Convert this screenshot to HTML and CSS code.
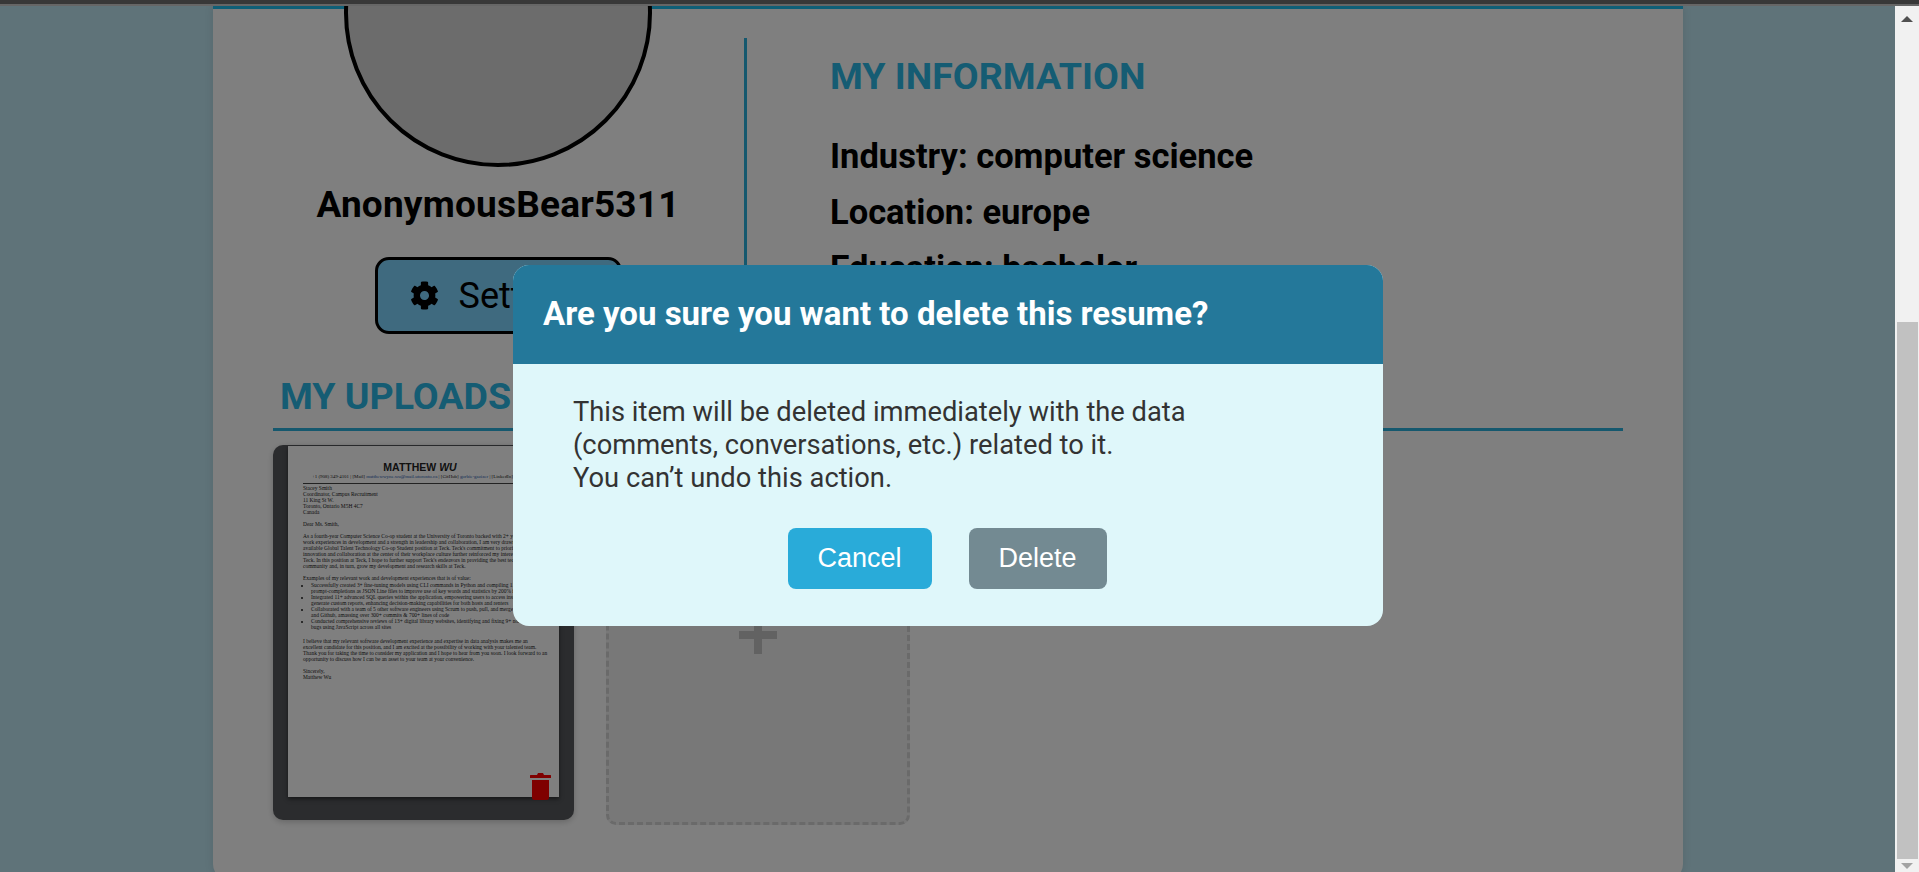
FILE: index.html
```html
<!DOCTYPE html>
<html lang="en">
<head>
    <meta charset="UTF-8">
    <meta name="viewport" content="width=device-width, initial-scale=1.0">
    <title>Profile</title>
    <link rel="stylesheet" href="styles.css">
</head>
<body>
    <div class="top-strip"></div>

    <div class="window">
        <div class="page">
            <div class="profile-card">
                <div class="profile-row">
                    <div class="user-col">
                        <div class="avatar"></div>
                        <div class="username">AnonymousBear5311</div>
                        <button class="settings-btn">
                            <svg class="gear" viewBox="0 0 512 512"><path d="M487.4 315.7l-42.6-24.6c4.3-23.2 4.3-47 0-70.2l42.6-24.6c4.9-2.8 7.1-8.6 5.5-14-11.1-35.6-30-67.8-54.7-94.6-3.8-4.1-10-5.1-14.8-2.3L380.8 110c-17.9-15.4-38.5-27.3-60.8-35.1V25.8c0-5.6-3.9-10.5-9.4-11.7-36.7-8.2-74.3-7.8-109.2 0-5.5 1.2-9.4 6.1-9.4 11.7V75c-22.2 7.9-42.8 19.8-60.8 35.1L88.7 85.5c-4.9-2.8-11-1.9-14.8 2.3-24.7 26.7-43.6 58.9-54.7 94.6-1.7 5.4.6 11.2 5.5 14L67.3 221c-4.3 23.2-4.3 47 0 70.2l-42.6 24.6c-4.9 2.8-7.1 8.6-5.5 14 11.1 35.6 30 67.8 54.7 94.6 3.8 4.1 10 5.1 14.8 2.3l42.6-24.6c17.9 15.4 38.5 27.3 60.8 35.1v49.2c0 5.6 3.9 10.5 9.4 11.7 36.7 8.2 74.3 7.8 109.2 0 5.5-1.2 9.4-6.1 9.4-11.7v-49.2c22.2-7.9 42.8-19.8 60.8-35.1l42.6 24.6c4.9 2.8 11 1.9 14.8-2.3 24.7-26.7 43.6-58.9 54.7-94.6 1.5-5.5-.7-11.3-5.6-14.1zM256 336c-44.1 0-80-35.9-80-80s35.9-80 80-80 80 35.9 80 80-35.9 80-80 80z"/></svg>
                            <span>Settings</span>
                        </button>
                    </div>
                    <div class="info-col">
                        <h2 class="section-title">MY INFORMATION</h2>
                        <p class="info-line first">Industry: computer science</p>
                        <p class="info-line">Location: europe</p>
                        <p class="info-line">Education: bachelor</p>
                    </div>
                </div>

                <h2 class="section-title uploads-title">MY UPLOADS</h2>

                <div class="uploads">
                    <div class="resume-card">
                        <div class="resume-doc">
                            <div class="doc-name">MATTHEW <em>WU</em></div>
                            <div class="doc-contact">+1 (908) 349-4101 | [Mail] <span class="doc-link">matthewwyne.wu@mail.utoronto.ca</span> | [GitHub] <span class="doc-link">gorbie-gazizer</span> | [LinkedIn] <span class="doc-link">matthew-wu</span></div>
                            <p>Stacey Smith<br>Coordinator, Campus Recruitment<br>11 King St W.<br>Toronto, Ontario M5H 4C7<br>Canada</p>
                            <p>Dear Ms. Smith,</p>
                            <p>As a fourth-year Computer Science Co-op student at the University of Toronto backed with 2+ years of<br>work experiences in development and a strength in leadership and collaboration, I am very drawn to the<br>available Global Talent Technology Co-op Student position at Teck. Teck's commitment to prioritizing<br>innovation and collaboration at the center of their workplace culture further reinforced my interest in<br>Teck. In this position at Teck, I hope to further support Teck's endeavors in providing the best tech to the<br>community and, in turn, grow my development and research skills at Teck.</p>
                            <p class="list-lead">Examples of my relevant work and development experiences that is of value:</p>
                            <ul>
                                <li>Successfully created 3+ fine-tuning models using CLI commands in Python and compiling 11K+<br>prompt-completions as JSON Line files to improve use of key words and statistics by 200% in tests</li>
                                <li>Integrated 11+ advanced SQL queries within the application, empowering users to access insights and<br>generate custom reports, enhancing decision-making capabilities for both hosts and renters</li>
                                <li>Collaborated with a team of 5 other software engineers using Scrum to push, pull, and merge code<br>and Github, amassing over 300+ commits &amp; 700+ lines of code</li>
                                <li>Conducted comprehensive reviews of 13+ digital library websites, identifying and fixing 9+ noted<br>bugs using JavaScript across all sites</li>
                            </ul>
                            <p>I believe that my relevant software development experience and expertise in data analysis makes me an<br>excellent candidate for this position, and I am excited at the possibility of working with your talented team.<br>Thank you for taking the time to consider my application and I hope to hear from you soon. I look forward to an<br>opportunity to discuss how I can be an asset to your team at your convenience.</p>
                            <p>Sincerely,<br>Matthew Wu</p>
                        </div>
                        <svg class="trash" viewBox="0 0 21 27"><path d="M8 0h5l1 2h6.500a.5.5 0 0 1 .5.500V5H0V2.500A.5.5 0 0 1 .5 2H7zM2 7h17v17.500a2.500 2.500 0 0 1-2.500 2.500h-12A2.500 2.500 0 0 1 2 24.500z"/></svg>
                    </div>
                    <div class="add-card">
                        <div class="plus"></div>
                    </div>
                </div>
            </div>

            <div class="overlay"></div>

            <div class="modal">
                <div class="modal-head">Are you sure you want to delete this resume?</div>
                <div class="modal-body">
                    <p>This item will be deleted immediately with the data<br>(comments, conversations, etc.) related to it.<br>You can’t undo this action.</p>
                    <div class="modal-actions">
                        <button class="btn-cancel">Cancel</button>
                        <button class="btn-delete">Delete</button>
                    </div>
                </div>
            </div>
        </div>

        <div class="scrollbar">
            <div class="arrow-up"></div>
            <div class="thumb-space"><div class="thumb"></div></div>
            <div class="arrow-down"></div>
        </div>
    </div>
</body>
</html>
```

FILE: styles.css
```css
* {
    box-sizing: border-box;
}

html, body {
    height: 100%;
}

body {
    display: flex;
    flex-direction: column;
    margin: 0;
    overflow: hidden;
    font-family: Roboto, Arial, sans-serif;
    color: #000;
}

.top-strip {
    flex: none;
    height: 6px;
    background: #666;
    border-top: 4px solid #383838;
}

.window {
    flex: 1;
    display: flex;
    min-height: 0;
}

.page {
    flex: 1;
    position: relative;
    overflow: hidden;
    padding: 0 212px 0 213px;
    background: #bee6f2;
}

.overlay {
    position: absolute;
    inset: 0;
    background: rgba(0, 0, 0, 0.5);
}

/* profile card */
.profile-card {
    height: 874px;
    padding: 0 60px;
    background: #fff;
    border-top: 3px solid #1fbfee;
    border-radius: 0 0 16px 16px;
    box-shadow: 0 0 10px rgba(0, 0, 0, 0.1);
}

.profile-row {
    display: flex;
    align-items: flex-start;
}

.user-col {
    flex: none;
    display: flex;
    flex-direction: column;
    align-items: center;
    width: 450px;
    margin: -150px 21px 0 0;
}

.avatar {
    flex: none;
    width: 308px;
    height: 308px;
    border: 4px solid #000;
    border-radius: 50%;
    background: #d8d8d8;
}

.username {
    margin-top: 17px;
    font-size: 37px;
    font-weight: 700;
    line-height: 42px;
    letter-spacing: 0.2px;
}

.settings-btn {
    display: flex;
    align-items: center;
    width: 247px;
    height: 77px;
    margin-top: 31px;
    padding: 0 0 0 32px;
    border: 3px solid #000;
    border-radius: 14px;
    background: #7fd4ff;
    color: #000;
    font-family: inherit;
    font-size: 36px;
}

.gear {
    width: 29px;
    height: 29px;
    margin-right: 20px;
}

.info-col {
    flex: 1;
    height: 310px;
    margin-top: 29px;
    padding-left: 83px;
    border-left: 3px solid #2bb0dd;
}

.section-title {
    margin: 0;
    font-size: 37.5px;
    font-weight: 700;
    line-height: 42px;
    color: #2ab8e6;
}

.info-col .section-title {
    margin-top: 17px;
}

.info-line {
    margin: 14px 0 0;
    font-size: 34.5px;
    font-weight: 700;
    line-height: 42px;
}

.info-line.first {
    margin-top: 38px;
}

.uploads-title {
    margin-top: 27px;
    padding: 0 7px 11px;
    border-bottom: 3px solid #2bb0dd;
}

/* uploads */
.uploads {
    display: flex;
    gap: 32px;
    margin-top: 14px;
}

.resume-card {
    position: relative;
    width: 301px;
    height: 375px;
    padding: 1px 15px 23px;
    border-radius: 10px;
    background: #56585c;
    box-shadow: 0 2px 6px rgba(0, 0, 0, 0.2);
}

.resume-doc {
    height: 100%;
    padding: 15px 15px 0;
    overflow: hidden;
    background: #fff;
    box-shadow: 0 2px 4px rgba(0, 0, 0, 0.5);
    font-family: "Liberation Serif", serif;
    font-size: 5.45px;
    line-height: 6px;
    white-space: nowrap;
    color: #222;
}

.resume-doc p {
    margin: 0 0 6px;
}

.resume-doc p.list-lead {
    margin-bottom: 1px;
}

.resume-doc ul {
    margin: 0 0 8px;
    padding-left: 8px;
}

.doc-name {
    padding-right: 7px;
    font-family: "Liberation Sans", sans-serif;
    font-size: 10.5px;
    font-weight: 700;
    line-height: 13px;
    text-align: center;
}

.doc-contact {
    padding: 0 0 3px 9px;
    margin-bottom: 1px;
    border-bottom: 1px solid #444;
    font-size: 4.9px;
}

.doc-link {
    color: #2a5db0;
}

.trash {
    position: absolute;
    right: 23px;
    bottom: 20px;
    width: 21px;
    height: 27px;
    fill: #ff0000;
}

.add-card {
    display: flex;
    align-items: center;
    justify-content: center;
    width: 304px;
    height: 380px;
    border: 3px dashed #d4d4d4;
    border-radius: 10px;
    background: #f0f0f0;
}

.plus {
    position: relative;
    width: 38px;
    height: 8px;
    background: #c4c4c4;
}

.plus::after {
    content: "";
    position: absolute;
    left: 15px;
    top: -15px;
    width: 8px;
    height: 38px;
    background: #c4c4c4;
}

/* delete dialog */
.modal {
    position: absolute;
    top: 259px;
    left: 513px;
    width: 870px;
    height: 361px;
    overflow: hidden;
    border-radius: 16px;
    background: #dff7fa;
}

.modal-head {
    height: 99px;
    padding-left: 30px;
    background: #24789a;
    color: #fff;
    font-size: 33px;
    font-weight: 700;
    line-height: 98px;
}

.modal-body {
    padding: 32px 60px 0;
    color: #333;
}

.modal-body p {
    margin: 0;
    font-size: 27.3px;
    line-height: 33px;
}

.modal-actions {
    display: flex;
    justify-content: center;
    gap: 37px;
    margin: 33px 2px 0 0;
}

.modal-actions button {
    height: 61px;
    border: none;
    border-radius: 8px;
    color: #fff;
    font-family: "Liberation Sans", Arial, sans-serif;
    font-size: 27px;
}

.btn-cancel {
    width: 144px;
    background: #29abd9;
}

.btn-delete {
    width: 138px;
    background: #738a92;
}

/* scrollbar */
.scrollbar {
    flex: none;
    display: flex;
    flex-direction: column;
    width: 24px;
    background: #f1f1f1;
}

.arrow-up, .arrow-down {
    flex: none;
    margin: 10px auto 0;
    width: 0;
    height: 0;
    border-left: 6px solid transparent;
    border-right: 6px solid transparent;
    border-bottom: 6px solid #505050;
}

.arrow-down {
    margin: 4px auto 3px;
    border-bottom: none;
    border-top: 6px solid #a3a3a3;
}

.thumb-space {
    flex: 1;
    display: flex;
    flex-direction: column;
    justify-content: flex-end;
}

.thumb {
    height: 537px;
    margin-left: 2px;
    width: 21px;
    background: #c1c1c1;
}
```
